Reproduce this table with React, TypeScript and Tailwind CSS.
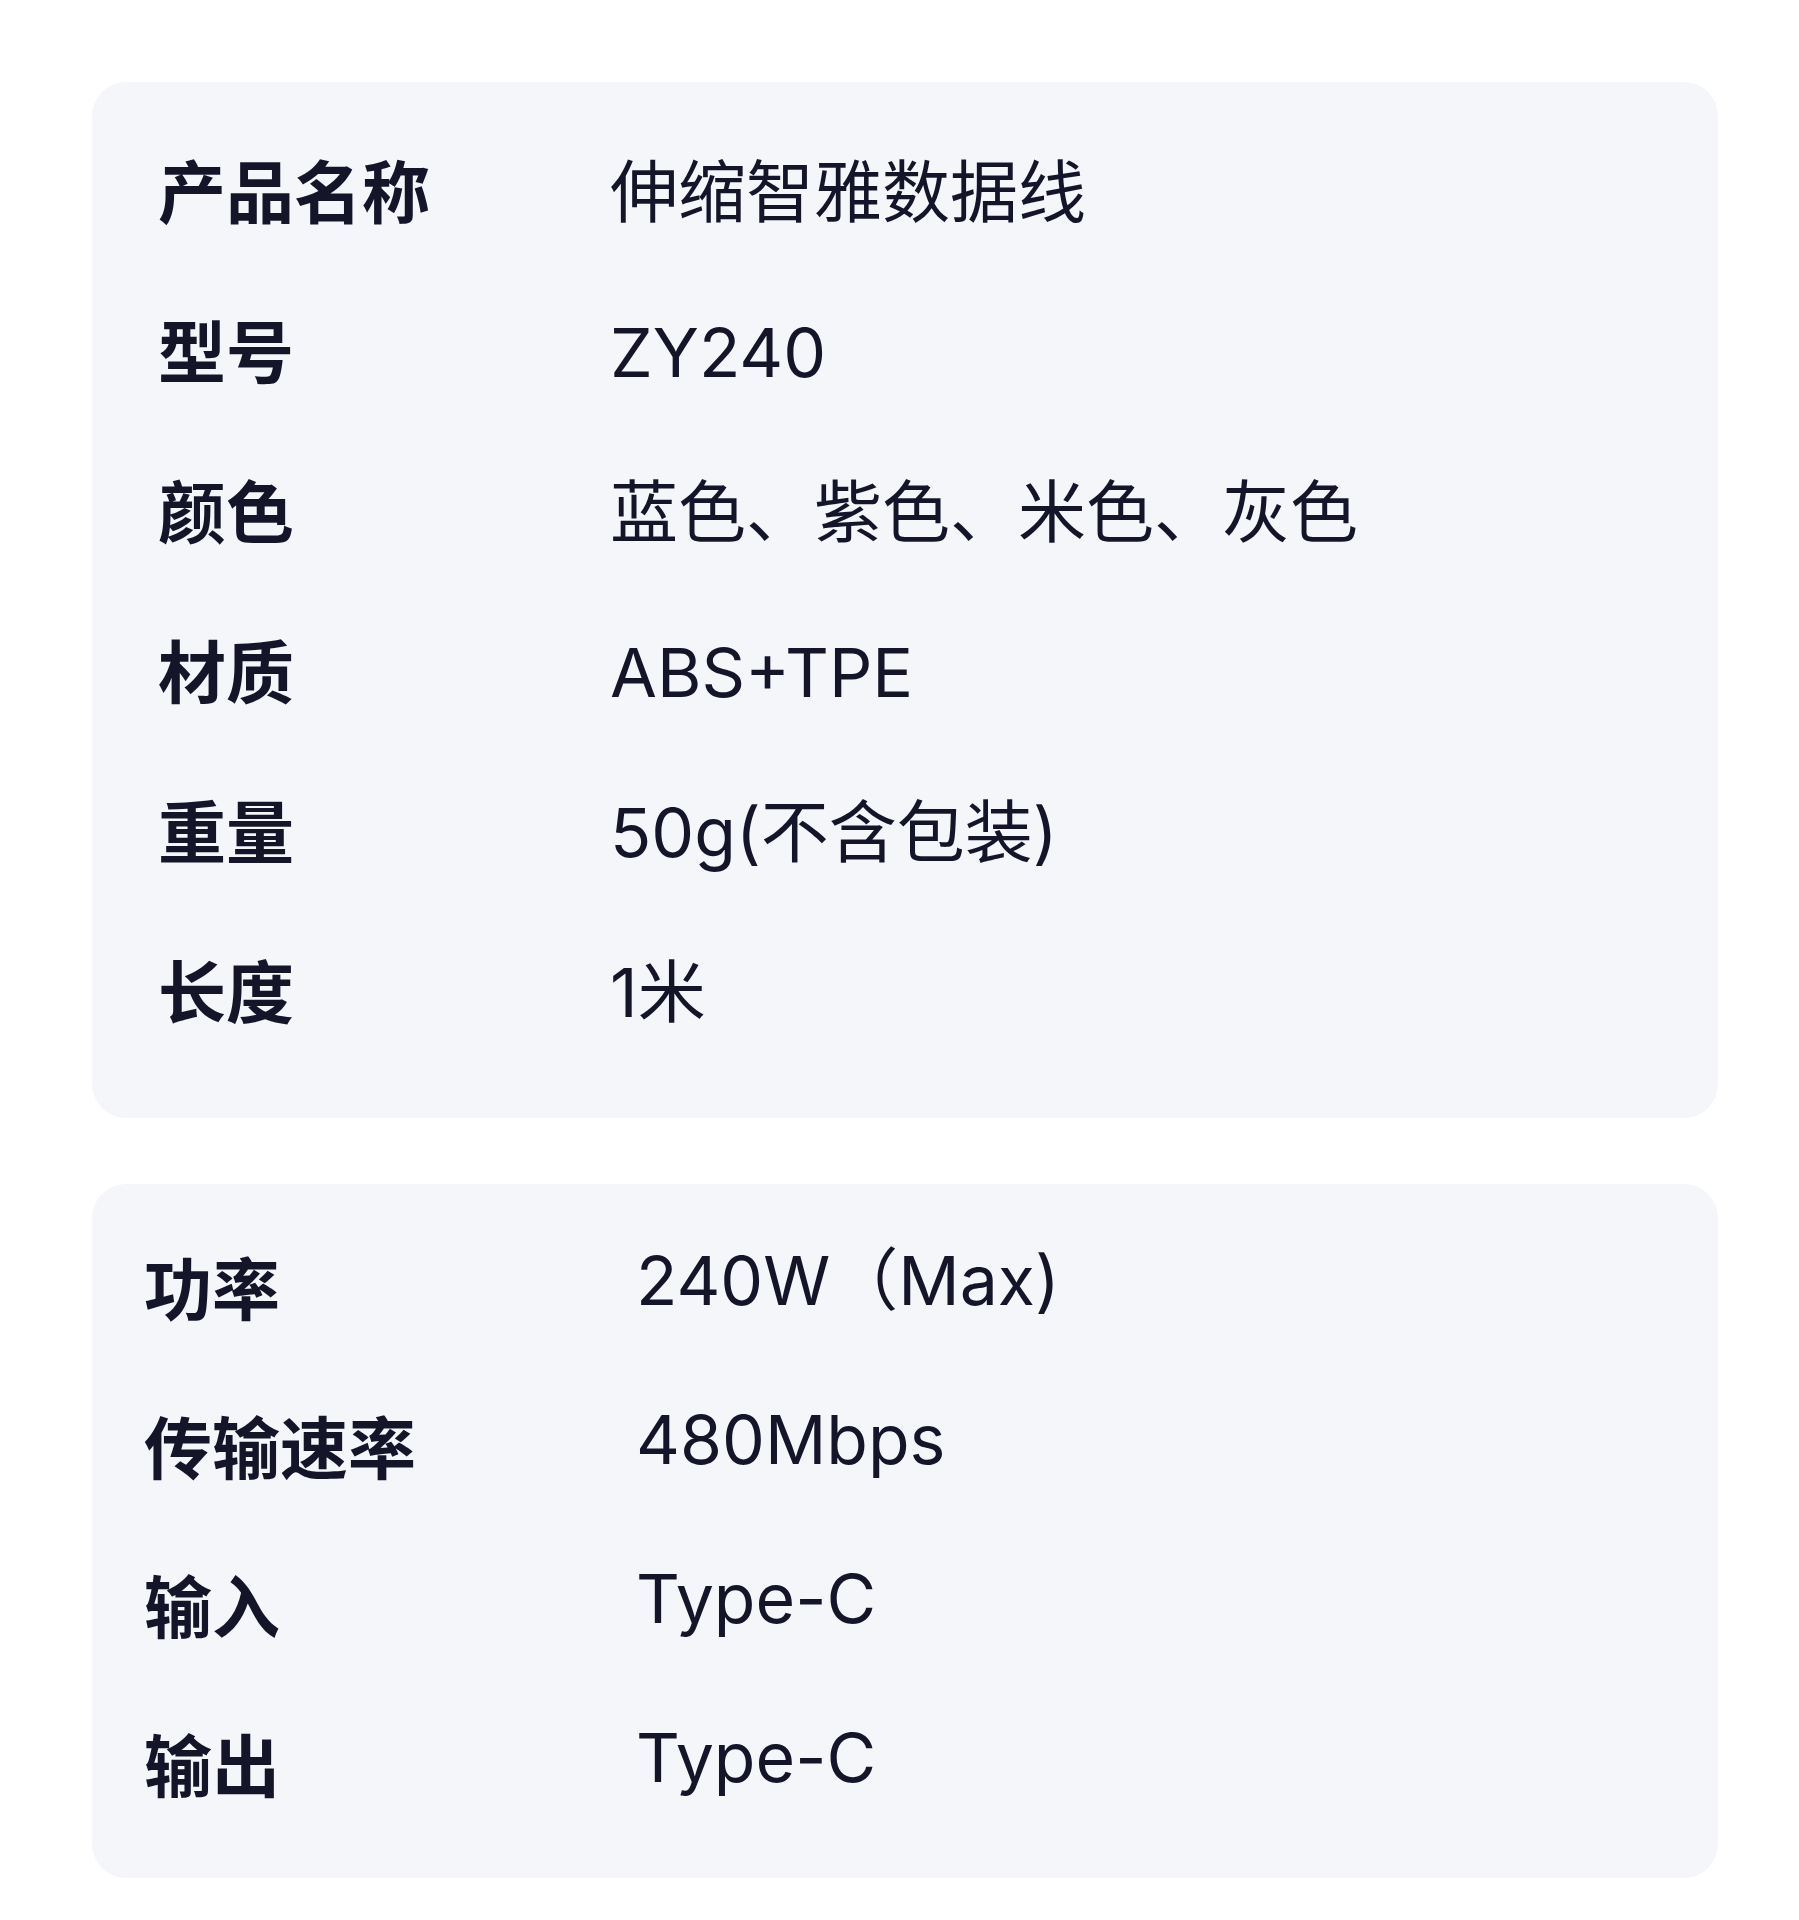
const basic = [
  { label: "产品名称", value: "伸缩智雅数据线" },
  { label: "型号", value: "ZY240" },
  { label: "颜色", value: "蓝色、紫色、米色、灰色" },
  { label: "材质", value: "ABS+TPE" },
  { label: "重量", value: "50g(不含包装)" },
  { label: "长度", value: "1米" },
]

const electrical = [
  { label: "功率", value: "240W（Max)" },
  { label: "传输速率", value: "480Mbps" },
  { label: "输入", value: "Type-C" },
  { label: "输出", value: "Type-C" },
]

const labelFont = "font-['Noto_Sans_CJK_SC',sans-serif]"
const valueFont = "font-['Inter','Noto_Sans_CJK_SC',sans-serif]"

export default function App() {
  return (
    <div className="min-h-[1920px] w-full bg-white pt-[82px] text-[#15152a]">
      {/* basic info */}
      <section className="ml-[92px] w-[1626px] rounded-[34px] bg-[#f4f6fa] pl-[66px] pt-[27px] pb-[49px]">
        {basic.map((row) => (
          <div key={row.label} className="flex h-[160px] items-center">
            <div className={`w-[452px] text-[68px] font-bold leading-none ${labelFont}`}>{row.label}</div>
            <div className={`pt-[6px] text-[68px] font-normal leading-none ${valueFont}`}>{row.value}</div>
          </div>
        ))}
      </section>

      {/* electrical */}
      <section className="mt-[66px] ml-[92px] w-[1626px] rounded-[34px] bg-[#f4f6fa] pl-[52px] pt-[16px] pb-[42px]">
        {electrical.map((row) => (
          <div key={row.label} className="flex h-[159px] items-center">
            <div className={`w-[492px] pt-[12px] text-[68px] font-bold leading-none ${labelFont}`}>{row.label}</div>
            <div className={`text-[68px] font-normal leading-none ${valueFont}`}>{row.value}</div>
          </div>
        ))}
      </section>
    </div>
  )
}
